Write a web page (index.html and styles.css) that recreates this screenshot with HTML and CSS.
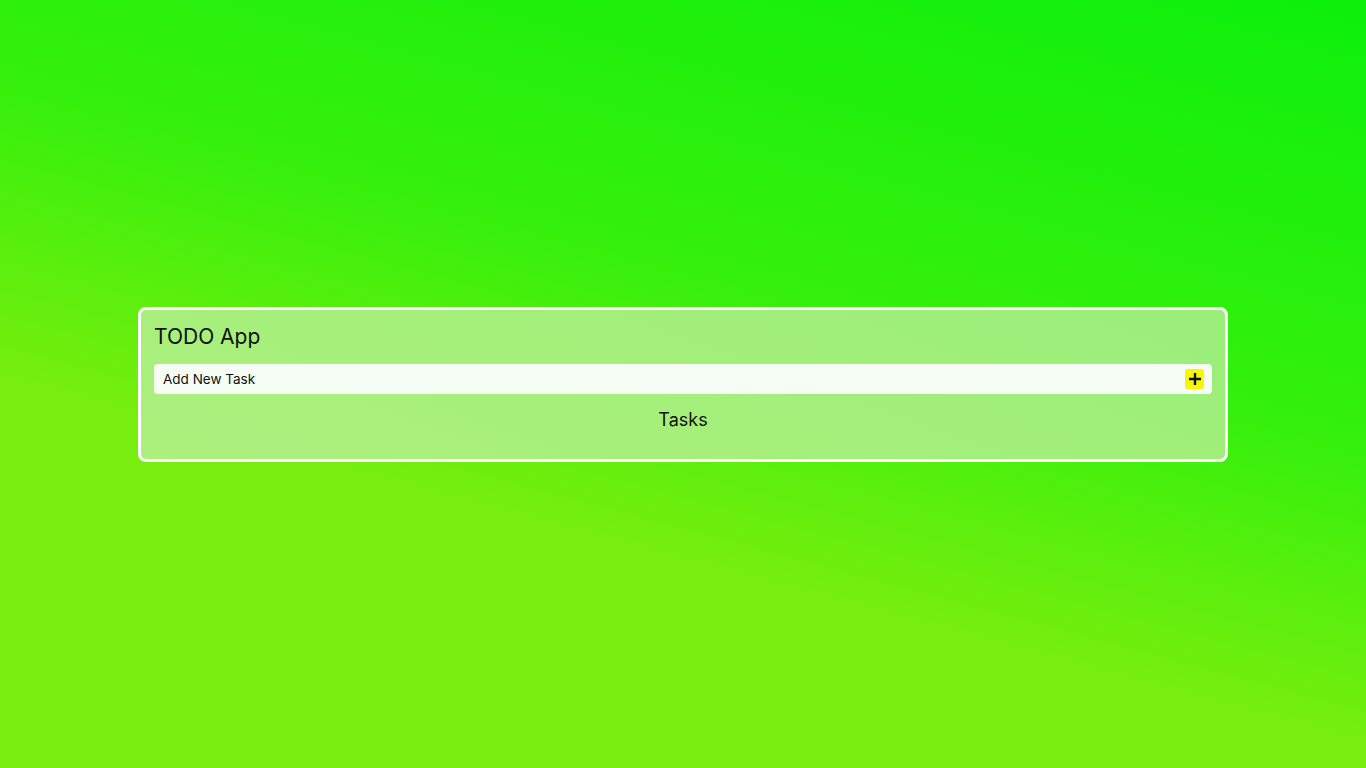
FILE: index.html
```html
<!DOCTYPE html>
<html lang="en">
<head>
<meta charset="utf-8">
<title>TODO App</title>
<link rel="stylesheet" href="styles.css">
</head>
<body>
<main class="page">
  <section class="card">
    <h1 class="title">TODO App</h1>
    <form class="add-row">
      <input class="add-input" type="text" placeholder="Add New Task">
      <button class="add-btn" type="button" aria-label="Add task">
        <svg width="14" height="14" viewBox="0 0 14 14"><path d="M7 1v12M1 7h12" stroke="#111" stroke-width="2.4"/></svg>
      </button>
    </form>
    <h2 class="tasks-title">Tasks</h2>
  </section>
</main>
</body>
</html>
```
FILE: styles.css
```css
* { box-sizing: border-box; }
html, body { margin: 0; height: 100%; }
body {
  font-family: Inter, "Liberation Sans", Arial, sans-serif;
  background: linear-gradient(195deg, #0cf00c 0%, #36f00c 40%, #78ee0e 66%, #78ee0e 100%);
  color: #111;
}
.page {
  height: 100vh;
  display: flex;
  align-items: center;
  justify-content: center;
}
.card {
  width: 1090px;
  height: 155px;
  border: 3px solid #fff;
  border-radius: 8px;
  background: linear-gradient(200deg, #9aee7a 0%, #a6ef7b 60%, #acf07e 100%);
  padding: 13px 13px;
}
.title {
  margin: 0;
  font-size: 21px;
  font-weight: 400;
  line-height: 28px;
}
.add-row {
  margin-top: 13px;
  height: 30px;
  background: #f6fdf4;
  border-radius: 4px;
  display: flex;
  align-items: center;
  padding: 0 8px 0 9px;
}
.add-input {
  flex: 1;
  border: none;
  outline: none;
  background: transparent;
  font-family: inherit;
  font-size: 13.5px;
  padding: 0;
  color: #111;
}
.add-input::placeholder { color: #111; opacity: 1; }
.add-btn {
  width: 19px;
  height: 20px;
  border: none;
  border-radius: 3px;
  background: #f7f700;
  padding: 0;
  display: flex;
  align-items: center;
  justify-content: center;
}
.tasks-title {
  margin: 15px 0 0;
  text-align: center;
  font-size: 18px;
  font-weight: 400;
  line-height: 22px;
}
```
